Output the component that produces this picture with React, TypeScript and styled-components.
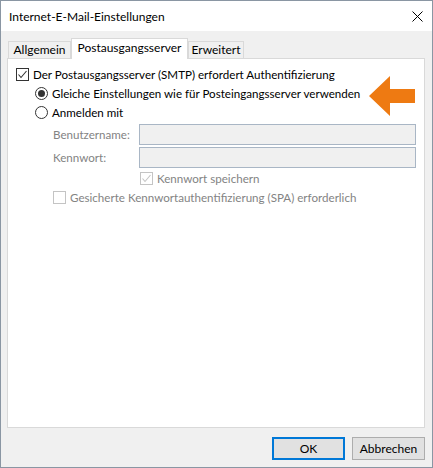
import React from "react";
import styled, { createGlobalStyle } from "styled-components";

const Global = createGlobalStyle`
  html, body { margin: 0; padding: 0; background: #f0f0f0; }
  * { box-sizing: border-box; }
  body { font-family: Lato, "Noto Sans", sans-serif; font-size: 12px; color: #000; }
`;

const Window = styled.div`
  position: relative;
  width: 433px;
  height: 468px;
  border: 1px solid #8a96a3;
  background: #f0f0f0;
  display: flex;
  flex-direction: column;
`;

const TitleBar = styled.div`
  height: 30px;
  background: #fff;
  display: flex;
  align-items: center;
  justify-content: space-between;
  padding: 0 9px 0 8px;
  font-size: 12px;
`;

const Body = styled.div`
  flex: 1;
  display: flex;
  flex-direction: column;
  padding: 7px 7px 0 6px;
`;

const TabStrip = styled.div`
  height: 20px;
  display: flex;
  align-items: flex-end;
  padding-left: 1px;
  position: relative;
  z-index: 1;
`;

const Tab = styled.div<{ $active?: boolean; $w: number }>`
  width: ${(p) => p.$w}px;
  height: ${(p) => (p.$active ? 21 : 17)}px;
  margin-bottom: ${(p) => (p.$active ? -1 : 0)}px;
  background: ${(p) => (p.$active ? "#fff" : "#f0f0f0")};
  border: 1px solid #d9d9d9;
  border-bottom: none;
  display: flex;
  align-items: ${(p) => (p.$active ? "flex-start" : "center")};
  padding-top: ${(p) => (p.$active ? 1 : 0)}px;
  justify-content: center;
  font-size: 12px;
  line-height: 16px;
  white-space: nowrap;
`;

const Panel = styled.div`
  height: 370px;
  background: #fff;
  border: 1px solid #d9d9d9;
  padding: 6px 0 0 8px;
  display: flex;
  flex-direction: column;
  font-size: 11.6px;
`;

const Row = styled.div<{ $indent?: number; $disabled?: boolean }>`
  height: 19px;
  display: flex;
  align-items: center;
  gap: 4px;
  padding-left: ${(p) => p.$indent ?? 0}px;
  color: ${(p) => (p.$disabled ? "#838383" : "#000")};
  white-space: nowrap;
`;

const FieldRow = styled.div`
  height: 21px;
  margin-top: 2px;
  display: flex;
  align-items: center;
  padding-left: 37px;
  color: #838383;
`;

const FieldLabel = styled.span`
  width: 86px;
`;

const Input = styled.div`
  width: 277px;
  height: 21px;
  background: #f0f0f0;
  border: 1px solid #a9b6c5;
`;

const Box = styled.span<{ $disabled?: boolean }>`
  width: 13px;
  height: 13px;
  flex: none;
  border: 1px solid ${(p) => (p.$disabled ? "#c4c4c4" : "#333")};
  background: #fff;
  display: flex;
  align-items: center;
  justify-content: center;
`;

const Radio = styled.span<{ $on?: boolean }>`
  width: 13px;
  height: 13px;
  flex: none;
  border-radius: 50%;
  border: 1px solid #333;
  background: #fff;
  display: flex;
  align-items: center;
  justify-content: center;
  &::after {
    content: "";
    width: 7px;
    height: 7px;
    border-radius: 50%;
    background: ${(p) => (p.$on ? "#333" : "transparent")};
  }
`;

const ButtonRow = styled.div`
  margin-top: 9px;
  display: flex;
  justify-content: flex-end;
  gap: 7px;
`;

const Button = styled.div<{ $default?: boolean }>`
  width: 73px;
  height: 23px;
  background: #e1e1e1;
  border: ${(p) => (p.$default ? "2px solid #0078d7" : "1px solid #adadad")};
  display: flex;
  align-items: center;
  justify-content: center;
  font-size: 12px;
`;

const Arrow = styled.svg`
  position: absolute;
  left: 366px;
  top: 73px;
`;

const Check = ({ color }: { color: string }) => (
  <svg width="11" height="11" viewBox="0 0 11 11">
    <path d="M1.5 5.5 L4 8.5 L9.5 2" fill="none" stroke={color} strokeWidth="1.1" />
  </svg>
);

export default function App() {
  return (
    <>
      <Global />
      <Window>
        <TitleBar>
          <span>Internet-E-Mail-Einstellungen</span>
          <svg width="11" height="11" viewBox="0 0 11 11">
            <path d="M0.5 0.5 L10.5 10.5 M10.5 0.5 L0.5 10.5" stroke="#000" strokeWidth="1" />
          </svg>
        </TitleBar>
        <Body>
          <TabStrip>
            <Tab $w={63}>Allgemein</Tab>
            <Tab $w={117} $active>Postausgangsserver</Tab>
            <Tab $w={56}>Erweitert</Tab>
          </TabStrip>
          <Panel>
            <Row>
              <Box><Check color="#333" /></Box>
              <span>Der Postausgangsserver (SMTP) erfordert Authentifizierung</span>
            </Row>
            <Row $indent={19}>
              <Radio $on />
              <span>Gleiche Einstellungen wie für Posteingangsserver verwenden</span>
            </Row>
            <Row $indent={19}>
              <Radio />
              <span>Anmelden mit</span>
            </Row>
            <FieldRow>
              <FieldLabel>Benutzername:</FieldLabel>
              <Input />
            </FieldRow>
            <FieldRow>
              <FieldLabel>Kennwort:</FieldLabel>
              <Input />
            </FieldRow>
            <Row $indent={124} $disabled style={{ marginTop: 1 }}>
              <Box $disabled><Check color="#c4c4c4" /></Box>
              <span>Kennwort speichern</span>
            </Row>
            <Row $indent={37} $disabled>
              <Box $disabled />
              <span>Gesicherte Kennwortauthentifizierung (SPA) erforderlich</span>
            </Row>
          </Panel>
          <ButtonRow>
            <Button $default>OK</Button>
            <Button>Abbrechen</Button>
          </ButtonRow>
        </Body>
        <Arrow width="50" height="44" viewBox="0 0 50 44">
          <polygon points="2,22 23,2 23,15 48,15 48,29 23,29 23,42" fill="#ee7a12" />
        </Arrow>
      </Window>
    </>
  );
}
